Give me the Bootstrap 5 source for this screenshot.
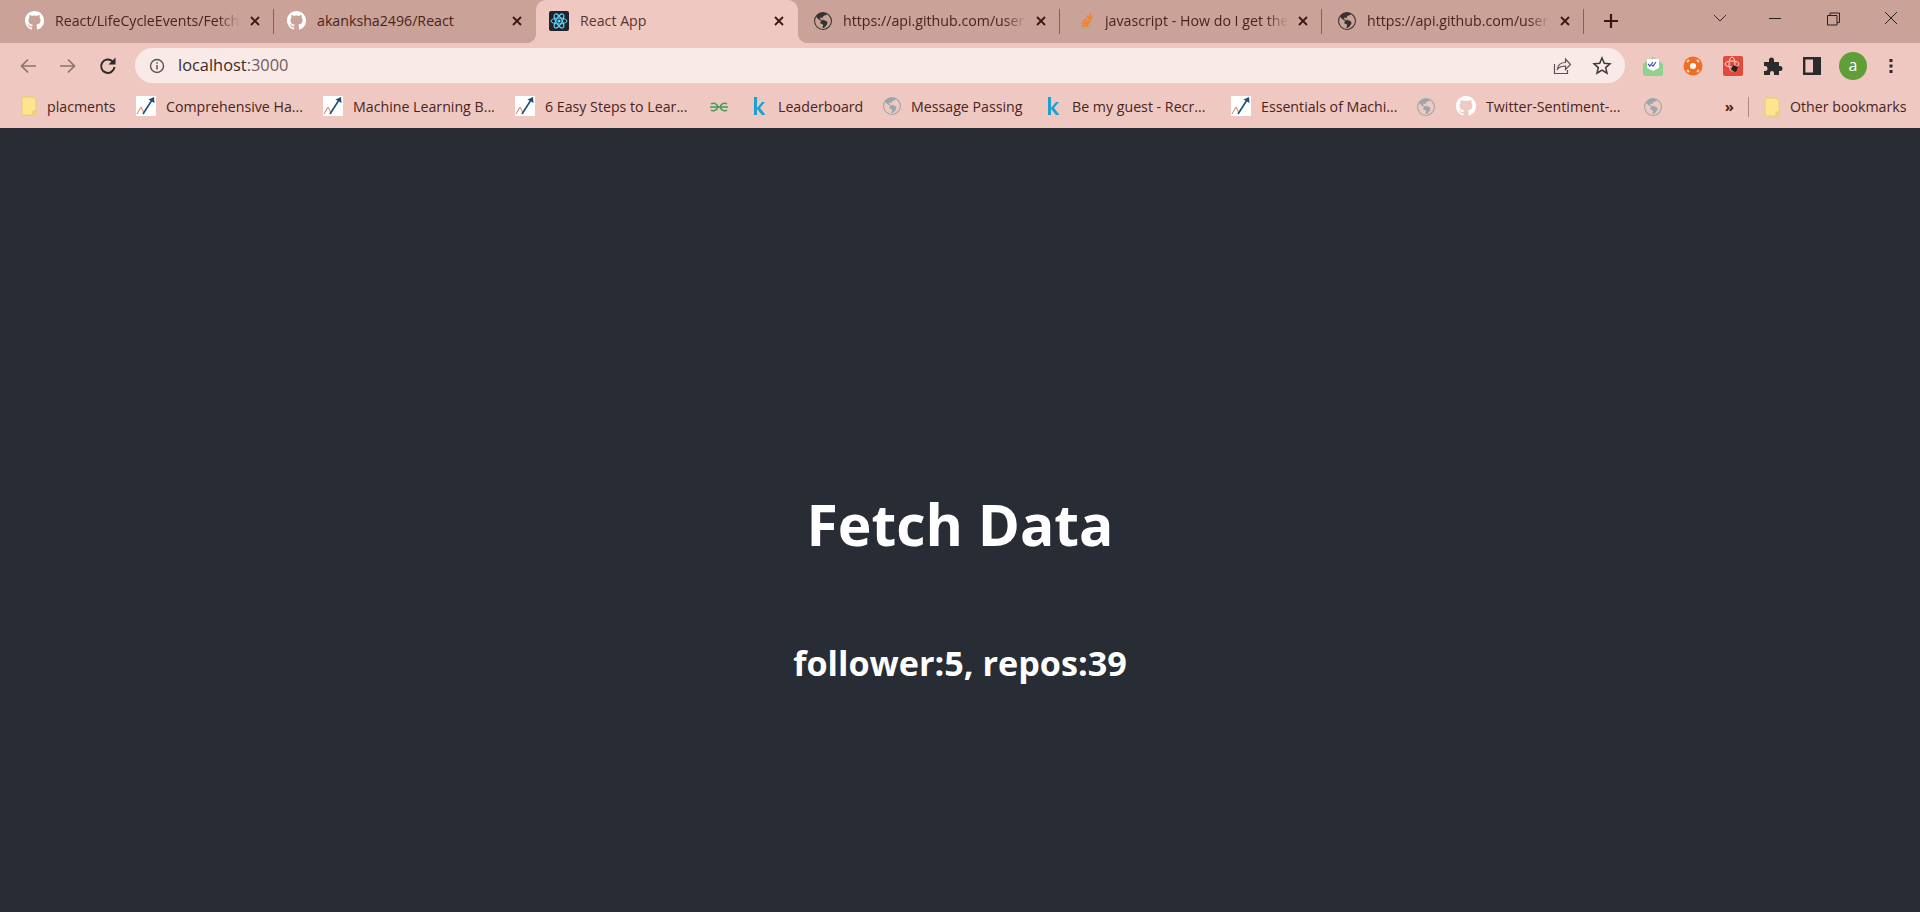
<!DOCTYPE html>
<html lang="en">
<head>
    <meta charset="UTF-8">
    <meta name="viewport" content="width=device-width, initial-scale=1.0">
    <title>React App</title>
    <link rel="stylesheet" href="https://cdn.jsdelivr.net/npm/bootstrap@5.3.0/dist/css/bootstrap.min.css">
    <style>
        html, body { height: 100%; }
        body {
            font-family: "Open Sans", "Noto Sans", sans-serif;
            background: #282c34;
            overflow: hidden;
        }
        .chrome-top { background: #efc9c1; height: 128px; color: #4a2320; }
        .tab-strip { background: #cba297; height: 43px; padding-left: 12px; }
        .tab-item {
            width: 262px;
            height: 43px;
            padding: 0 14px 2px 13px;
            font-size: 14.2px;
            position: relative;
            flex: none;
        }
        .tab-item.sep::after {
            content: "";
            position: absolute;
            right: 0;
            top: 9px;
            height: 25px;
            width: 1px;
            background: #8a5f57;
        }
        .tab-item.current {
            background: #efc9c1;
            border-radius: 10px 10px 0 0;
            color: #5b3430;
        }
        .tab-item.current::before, .tab-item.current::after {
            content: "";
            position: absolute;
            bottom: 0;
            width: 10px;
            height: 10px;
        }
        .tab-item.current::before { left: -10px; background: radial-gradient(circle at 0 0, transparent 10px, #efc9c1 10.5px); }
        .tab-item.current::after { right: -10px; background: radial-gradient(circle at 100% 0, transparent 10px, #efc9c1 10.5px); }
        .tab-title { flex: 1; min-width: 0; overflow: hidden; white-space: nowrap; margin-left: 11px; }
        .tab-fade { mask-image: linear-gradient(to right, #000 calc(100% - 22px), transparent); -webkit-mask-image: linear-gradient(to right, #000 calc(100% - 22px), transparent); }
        .tab-x { width: 10px; height: 10px; flex: none; margin-left: 10px; }
        .fav-shift { margin-left: 3px; flex: none; }
        .new-tab { margin: 13px 0 0 19px; }
        .win-btns { margin-left: auto; }
        .tool-row { height: 45px; padding-left: 18px; gap: 20px; }
        .omni {
            background: #f9eae8;
            border-radius: 18px;
            height: 35px;
            width: 1490px;
            margin: 0 -2px 0 -3px;
            padding: 0 13px 0 14px;
            font-size: 16.4px;
            color: #3b2b29;
            gap: 20px;
        }
        .omni span { color: #6f5d5b; }
        .omni-text { margin-left: -7px; }
        .avatar-gap { margin: 0 -6px 0 -2px; }
        .mark-row { height: 40px; padding: 0 0 3px 21px; font-size: 14.2px; white-space: nowrap; }
        .mark-item { flex: none; }
        .mark-item span { margin-left: 10px; }
        .mark-item span.wide-gap { margin-left: 13px; }
        .bm-115 { width: 115px; } .bm-187 { width: 187px; } .bm-192 { width: 192px; } .bm-194 { width: 194px; }
        .bm-44 { width: 44px; } .bm-130 { width: 130px; } .bm-164 { width: 164px; } .bm-184 { width: 184px; }
        .bm-186 { width: 186px; } .bm-39 { width: 39px; } .bm-188 { width: 188px; }
        .mark-more { margin-left: auto; margin-right: 14px; font-size: 15px; line-height: 1; }
        .mark-other { width: 172px; height: 20px; padding-left: 15px; border-left: 1px solid #a98a83; }
        .page-main { height: 784px; color: #fff; padding-top: 133px; }
        .page-main h1 { font-size: 57px; font-weight: 700; margin: 0; }
        .page-main h2 { font-size: 34.2px; font-weight: 700; margin: 83px 0 0; }
    </style>
</head>
<body>
    <svg width="0" height="0" class="d-block">
        <symbol id="gh" viewBox="0 0 16 16"><path fill="#fff" d="M8 0C3.58 0 0 3.58 0 8c0 3.54 2.29 6.53 5.47 7.59.4.07.55-.17.55-.38 0-.19-.01-.82-.01-1.49-2.01.37-2.53-.49-2.69-.94-.09-.23-.48-.94-.82-1.13-.28-.15-.68-.52-.01-.53.63-.01 1.08.58 1.23.82.72 1.21 1.87.87 2.33.66.07-.52.28-.87.51-1.07-1.78-.2-3.64-.89-3.64-3.95 0-.87.31-1.59.82-2.15-.08-.2-.36-1.02.08-2.12 0 0 .67-.21 2.2.82.64-.18 1.32-.27 2-.27.68 0 1.36.09 2 .27 1.53-1.04 2.2-.82 2.2-.82.44 1.1.16 1.92.08 2.12.51.56.82 1.27.82 2.15 0 3.07-1.87 3.75-3.65 3.95.29.25.54.73.54 1.48 0 1.07-.01 1.93-.01 2.2 0 .21.15.46.55.38A8.012 8.012 0 0 0 16 8c0-4.42-3.58-8-8-8z"/></symbol>
        <symbol id="globe" viewBox="0 0 16 16"><path d="M8 0a8 8 0 1 0 0 16A8 8 0 0 0 8 0ZM2.04 4.326c.325 1.329 2.532 2.54 3.717 3.19.48.263.793.434.743.484-.08.08-.162.158-.242.234-.416.396-.787.749-.758 1.266.035.634.618.824 1.214 1.017.577.188 1.168.38 1.286.983.082.417-.075.988-.22 1.52-.215.782-.406 1.48.22 1.48 1.5-.5 3.798-3.186 4-5 .138-1.243-2-2-3.5-2.5-.478-.16-.755.081-.99.284-.172.15-.322.279-.51.216-.445-.148-2.5-2-1.5-2.5.78-.39.952-.171 1.227.182.078.099.163.208.273.318.609.304.662-.132.723-.633.039-.322.081-.671.277-.867.434-.434 1.265-.791 2.028-1.12.712-.306 1.365-.587 1.579-.88A7 7 0 1 1 2.04 4.327Z"/></symbol>
        <symbol id="tabx" viewBox="0 0 10 10"><path d="M1 1l8 8M9 1l-8 8" stroke="#3d1512" stroke-width="1.8" fill="none"/></symbol>
        <symbol id="chart" viewBox="0 0 20 20"><rect width="20" height="20" fill="#fff"/><path d="M1 18l4-7 3 6" fill="none" stroke="#e2775f" stroke-width="1"/><path d="M7 18L16 4" fill="none" stroke="#1c4f7c" stroke-width="1.6"/><path d="M12.500 3.500L18 1l.5 6z" fill="#1c4f7c"/></symbol>
        <symbol id="folder" viewBox="0 0 16 20"><path d="M2 1h10l3 2v12h-3v4H2a1 1 0 0 1-1-1V2a1 1 0 0 1 1-1zM12 19l3-4v3a1 1 0 0 1-1 1z" fill="#fde58f" stroke="#ecca6a"/></symbol>
        <symbol id="kag" viewBox="0 0 12 20"><path d="M1 1h3v11l5-6h3l-5 6 5.500 7H9l-5-6v6H1z" fill="#20a0d0"/></symbol>
    </svg>

    <div class="chrome-top">
        <div class="tab-strip d-flex">
            <div class="tab-item sep d-flex align-items-center"><svg width="19" height="19"><use href="#gh"/></svg><div class="tab-title tab-fade">React/LifeCycleEvents/FetchData</div><svg class="tab-x"><use href="#tabx"/></svg></div>
            <div class="tab-item d-flex align-items-center"><svg width="19" height="19"><use href="#gh"/></svg><div class="tab-title">akanksha2496/React</div><svg class="tab-x"><use href="#tabx"/></svg></div>
            <div class="tab-item current d-flex align-items-center"><svg width="20" height="20" viewBox="0 0 20 20"><rect width="20" height="20" rx="2" fill="#20232a"/><g fill="none" stroke="#61dafb"><ellipse cx="10" cy="10" rx="8" ry="3"/><ellipse cx="10" cy="10" rx="8" ry="3" transform="rotate(60 10 10)"/><ellipse cx="10" cy="10" rx="8" ry="3" transform="rotate(120 10 10)"/></g><circle cx="10" cy="10" r="1.6" fill="#61dafb"/></svg><div class="tab-title">React App</div><svg class="tab-x"><use href="#tabx"/></svg></div>
            <div class="tab-item sep d-flex align-items-center"><svg class="fav-shift" width="18" height="18" fill="#333"><use href="#globe"/></svg><div class="tab-title tab-fade">https://api.github.com/users/akanksha2496</div><svg class="tab-x"><use href="#tabx"/></svg></div>
            <div class="tab-item sep d-flex align-items-center"><svg class="fav-shift" width="18" height="18" viewBox="0 0 18 18"><path d="M3 11v5.500h11V11" fill="none" stroke="#b9a79c" stroke-width="1.500"/><path d="M5 14h7M5.500 11.500l7 1M6.500 9l6.500 2.500M8.500 6.500l5.500 4M11 3.500l4 5.500M14 1l1.500 6" stroke="#f48024" stroke-width="1.500"/></svg><div class="tab-title tab-fade">javascript - How do I get the returned value</div><svg class="tab-x"><use href="#tabx"/></svg></div>
            <div class="tab-item sep d-flex align-items-center"><svg class="fav-shift" width="18" height="18" fill="#333"><use href="#globe"/></svg><div class="tab-title tab-fade">https://api.github.com/users/akanksha2496</div><svg class="tab-x"><use href="#tabx"/></svg></div>
            <svg class="new-tab" width="16" height="16" viewBox="0 0 16 16"><path d="M8 1v14M1 8h14" stroke="#3d1512" stroke-width="2.200"/></svg>
            <div class="win-btns d-flex align-items-start">
                <svg width="52" height="36" viewBox="0 0 52 36"><path d="M20 15l6 6 6-6" fill="none" stroke="#4a2320"/></svg>
                <svg width="58" height="36" viewBox="0 0 58 36"><path d="M23 18.500h12" stroke="#222"/></svg>
                <svg width="58" height="36" viewBox="0 0 58 36"><path d="M23.500 15.500h9.500v9.500h-9.500zM26 15.500V13h9.500v9.500H33" fill="none" stroke="#222"/></svg>
                <svg width="58" height="36" viewBox="0 0 58 36"><path d="M23 12l12 12M35 12L23 24" stroke="#222"/></svg>
            </div>
        </div>

        <div class="tool-row d-flex align-items-center">
            <svg width="20" height="20" viewBox="0 0 20 20"><path d="M18 10H4M10 3.500L3.500 10l6.500 6.500" fill="none" stroke="#8a7370" stroke-width="1.700"/></svg>
            <svg width="20" height="20" viewBox="0 0 20 20"><path d="M2 10h14M10 3.500l6.500 6.500-6.500 6.500" fill="none" stroke="#8a7370" stroke-width="1.700"/></svg>
            <svg width="20" height="20" viewBox="0 0 20 20"><path d="M16.500 11a6.700 6.700 0 1 1-2-5.600" fill="none" stroke="#2b2b2b" stroke-width="2"/><path d="M17.500 1.500v7h-7z" fill="#2b2b2b"/></svg>
            <div class="omni d-flex align-items-center">
                <svg width="16" height="16" viewBox="0 0 16 16"><circle cx="8" cy="8" r="6.500" fill="none" stroke="#555" stroke-width="1.400"/><path d="M8 7v4.500M8 4.300v1.500" stroke="#555" stroke-width="1.500"/></svg>
                <div class="omni-text">localhost<span>:3000</span></div>
                <svg class="ms-auto" width="20" height="20" viewBox="0 0 20 20"><path d="M2.500 8v9.500h13V14M5.500 13c.5-4 3.500-6.500 8-6.500V3l5 5.500-5 5V10c-3 0-6 1-8 3z" fill="none" stroke="#5b5150" stroke-width="1.200"/></svg>
                <svg width="20" height="20" viewBox="0 0 20 20"><path d="M10 2l2.300 5.300 5.700.5-4.300 3.800 1.300 5.600-5-3-5 3 1.300-5.600L2 7.800l5.700-.5z" fill="none" stroke="#3a3a3a" stroke-width="1.500"/></svg>
            </div>
            <svg width="20" height="20" viewBox="0 0 20 20"><path d="M0 8l10-7 10 7v10a2 2 0 0 1-2 2H2a2 2 0 0 1-2-2z" fill="#8fd18f"/><path d="M4 3h12v9l-6 3-6-3z" fill="#fff"/><path d="M5 8l2 2 3-4M9 9l1 1 3-4" fill="none" stroke="#3f51b5" stroke-width="1.200"/></svg>
            <svg width="20" height="20" viewBox="0 0 20 20"><circle cx="10" cy="10" r="9.500" fill="#f26c22"/><circle cx="10" cy="10" r="3" fill="#fff"/><path d="M4 6l2-2M16 6l-2-2M4 14l2 2M16 14l-2 2" stroke="#f9dcc7" stroke-width="2"/></svg>
            <svg width="20" height="20" viewBox="0 0 20 20"><rect width="20" height="20" rx="2" fill="#e24a3b"/><g fill="none" stroke="#f9d8d0"><ellipse cx="9" cy="8" rx="7" ry="3"/><ellipse cx="9" cy="8" rx="3" ry="7"/></g><path d="M10 9l5 2-2 5-5-2z" fill="#222"/></svg>
            <svg width="20" height="20" viewBox="0 0 20 20"><path d="M1 6h5V4a2.500 2.500 0 0 1 5 0v2h5v4h1a2.500 2.500 0 0 1 0 5h-1v4h-5v-2a2 2 0 0 0-4 0v2H1v-4h1a2.500 2.500 0 0 0 0-5H1z" fill="#2b2b2b"/></svg>
            <svg width="18" height="18" viewBox="0 0 18 18"><path d="M1.200 1.200h15.600v15.600H1.200z" fill="none" stroke="#2b2b2b" stroke-width="2.400"/><rect x="10" y="2" width="7" height="14" fill="#2b2b2b"/></svg>
            <svg class="avatar-gap" width="28" height="28" viewBox="0 0 28 28"><circle cx="14" cy="14" r="14" fill="#5f9e38"/><text x="14" y="19" font-size="16" fill="#fff" text-anchor="middle" font-family="Open Sans">a</text></svg>
            <svg width="20" height="20" viewBox="0 0 20 20"><path d="M10 3v3M10 8.500v3M10 14v3" stroke="#2b2b2b" stroke-width="3"/></svg>
        </div>

        <div class="mark-row d-flex align-items-center">
            <div class="mark-item bm-115 d-flex align-items-center"><svg width="16" height="20"><use href="#folder"/></svg><span>placments</span></div>
            <div class="mark-item bm-187 d-flex align-items-center"><svg width="20" height="20"><use href="#chart"/></svg><span>Comprehensive Ha...</span></div>
            <div class="mark-item bm-192 d-flex align-items-center"><svg width="20" height="20"><use href="#chart"/></svg><span>Machine Learning B...</span></div>
            <div class="mark-item bm-194 d-flex align-items-center"><svg width="20" height="20"><use href="#chart"/></svg><span>6 Easy Steps to Lear...</span></div>
            <div class="mark-item bm-44 d-flex align-items-center"><svg width="20" height="12" viewBox="0 0 20 12"><path d="M1 6h18M2 3c3-2 6 0 7 3-1 3-5 5-7 3M18 3c-3-2-6 0-7 3 1 3 5 5 7 3" fill="none" stroke="#3f9c5a" stroke-width="1.500"/></svg></div>
            <div class="mark-item bm-130 d-flex align-items-center"><svg width="12" height="20"><use href="#kag"/></svg><span class="wide-gap">Leaderboard</span></div>
            <div class="mark-item bm-164 d-flex align-items-center"><svg width="18" height="18" fill="#9aa5ac"><use href="#globe"/></svg><span>Message Passing</span></div>
            <div class="mark-item bm-184 d-flex align-items-center"><svg width="12" height="20"><use href="#kag"/></svg><span class="wide-gap">Be my guest - Recr...</span></div>
            <div class="mark-item bm-186 d-flex align-items-center"><svg width="20" height="20"><use href="#chart"/></svg><span>Essentials of Machi...</span></div>
            <div class="mark-item bm-39 d-flex align-items-center"><svg width="18" height="18" fill="#9aa5ac"><use href="#globe"/></svg></div>
            <div class="mark-item bm-188 d-flex align-items-center"><svg width="20" height="20"><use href="#gh"/></svg><span>Twitter-Sentiment-...</span></div>
            <div class="mark-item d-flex align-items-center"><svg width="18" height="18" fill="#9aa5ac"><use href="#globe"/></svg></div>
            <div class="mark-more fw-bold">»</div>
            <div class="mark-item mark-other d-flex align-items-center"><svg width="16" height="20"><use href="#folder"/></svg><span>Other bookmarks</span></div>
        </div>
    </div>

    <main class="page-main d-flex flex-column align-items-center justify-content-center text-center">
        <h1>Fetch Data</h1>
        <h2>follower:5, repos:39</h2>
    </main>

    <script src="https://cdn.jsdelivr.net/npm/bootstrap@5.3.0/dist/js/bootstrap.bundle.min.js"></script>
</body>
</html>
